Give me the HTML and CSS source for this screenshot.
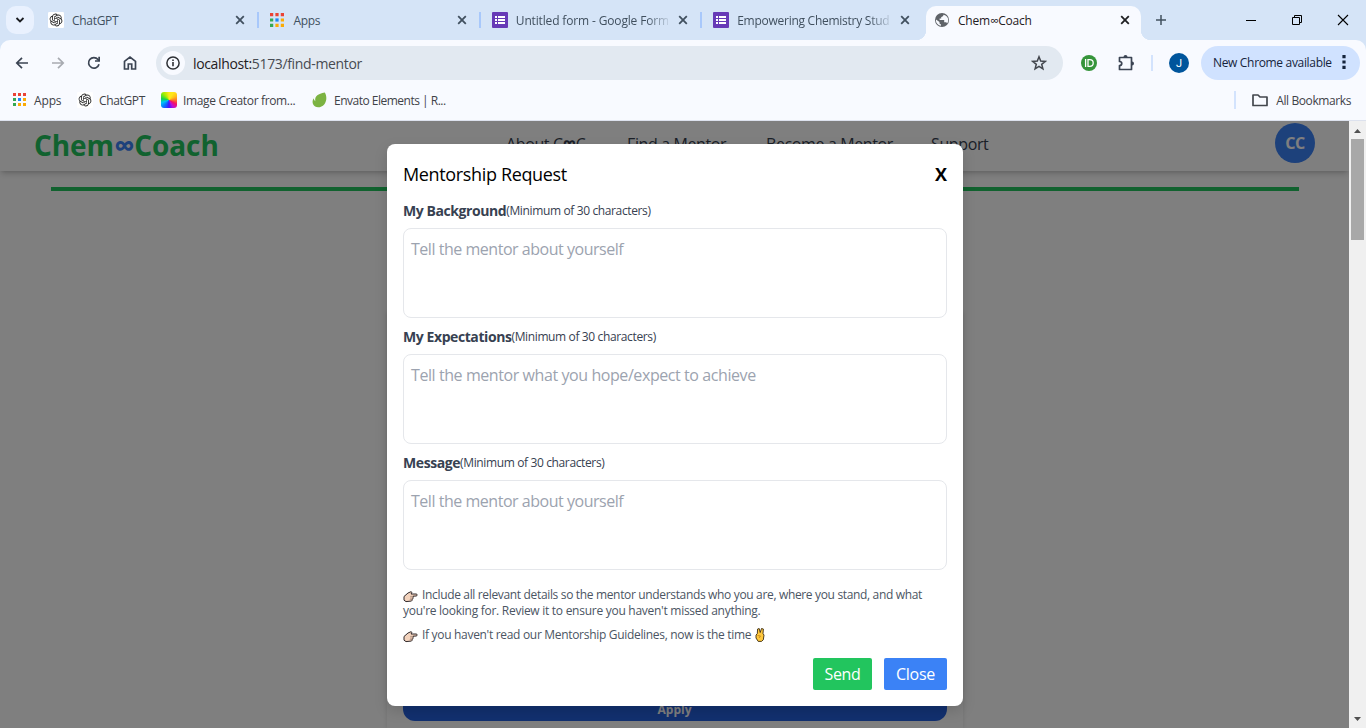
FILE: index.html
```html
<!DOCTYPE html>
<html lang="en">
<head>
<meta charset="utf-8">
<title>Chem∞Coach</title>
<link rel="stylesheet" href="styles.css">
</head>
<body>
<svg class="defs" width="0" height="0" aria-hidden="true">
  <symbol id="close" viewBox="0 0 10 10"><path d="M1.2 1.2l7.6 7.6M8.8 1.2L1.2 8.8" fill="none" stroke="currentColor" stroke-width="1.8"/></symbol>
  <symbol id="grid" viewBox="0 0 13 13"><path fill="#ea4335" d="M0 0h3v3H0zM5 0h3v3H5zM10 0h3v3h-3z"/><path fill="#34a853" d="M0 5h3v3H0zM0 10h3v3H0z"/><path fill="#1e88f5" d="M5 5h3v3H5z"/><path fill="#fbab05" d="M10 5h3v3h-3zM5 10h3v3H5zM10 10h3v3h-3z"/></symbol>
  <symbol id="gpt" viewBox="0 0 24 24"><rect width="24" height="24" rx="2" fill="#fff"/><g transform="translate(2.4 2.400) scale(.8)"><path fill="#222" d="M22.282 9.821a5.985 5.985 0 0 0-.516-4.910 6.046 6.046 0 0 0-6.510-2.900A6.065 6.065 0 0 0 4.981 4.182a5.985 5.985 0 0 0-3.998 2.900 6.046 6.046 0 0 0 .743 7.097 5.980 5.980 0 0 0 .511 4.911 6.051 6.051 0 0 0 6.515 2.900A5.985 5.985 0 0 0 13.260 24a6.056 6.056 0 0 0 5.772-4.206 5.990 5.990 0 0 0 3.998-2.900 6.056 6.056 0 0 0-.748-7.073zM13.260 22.430a4.476 4.476 0 0 1-2.876-1.041l.141-.080 4.779-2.758a.795.795 0 0 0 .393-.681v-6.737l2.020 1.169a.071.071 0 0 1 .038.052v5.583a4.504 4.504 0 0 1-4.495 4.493zM3.600 18.304a4.471 4.471 0 0 1-.535-3.014l.142.085 4.783 2.759a.771.771 0 0 0 .781 0l5.843-3.369v2.332a.080.080 0 0 1-.033.062L9.740 19.950a4.500 4.500 0 0 1-6.140-1.646zM2.341 7.896a4.485 4.485 0 0 1 2.366-1.973V11.600a.766.766 0 0 0 .388.677l5.815 3.355-2.020 1.168a.076.076 0 0 1-.071 0l-4.830-2.786A4.504 4.504 0 0 1 2.341 7.872zm16.596 3.856l-5.833-3.388L15.119 7.200a.076.076 0 0 1 .071 0l4.830 2.791a4.494 4.494 0 0 1-.677 8.105v-5.678a.790.790 0 0 0-.406-.666zm2.011-3.023l-.142-.085-4.774-2.782a.776.776 0 0 0-.785 0L9.409 9.230V6.897a.066.066 0 0 1 .028-.061l4.830-2.787a4.500 4.500 0 0 1 6.681 4.660zM8.307 12.863l-2.020-1.164a.080.080 0 0 1-.038-.057V6.075a4.500 4.500 0 0 1 7.376-3.454l-.142.081-4.778 2.758a.795.795 0 0 0-.393.682zm1.097-2.366l2.602-1.499 2.607 1.500v2.999l-2.597 1.500-2.607-1.500z"/></g></symbol>
  <symbol id="form" viewBox="0 0 16 16"><rect width="16" height="16" rx="1" fill="#673ab7"/><path fill="#fff" d="M3 4h2v2H3zM6 4h7v2H6zM3 7h2v2H3zM6 7h7v2H6zM3 10h2v2H3zM6 10h7v2H6z"/></symbol>
  <symbol id="point" viewBox="0 0 15 12"><path d="M1 5.5L5 2l3-1.3 1 .8-1 1.5h5.2c1.3 0 1.3 1.9 0 2L10 5.2c.8.7.3 1.5-.3 1.7.5.7 0 1.4-.6 1.5.3.9-.2 1.5-1 1.7L3 10.6 1 9.2z" fill="#f3d3bd" stroke="#30282a" stroke-width="1"/><path d="M7.2 5.4H10M7 7.1h2.7M6.8 8.6h2.4" stroke="#8b6d60" stroke-width=".6"/></symbol>
</svg>

<header class="chrome">
  <div class="tabstrip">
    <button class="tab-search"><svg width="10" height="8" viewBox="0 0 10 8"><path d="M1.5 2L5 5.5 8.5 2" fill="none" stroke="#1b1d21" stroke-width="1.8"/></svg></button>
    <div class="tab first"><svg class="fav"><use href="#gpt"/></svg><span class="tab-title">ChatGPT</span><svg class="x"><use href="#close"/></svg></div>
    <div class="tab"><svg class="fav apps"><use href="#grid"/></svg><span class="tab-title">Apps</span><svg class="x"><use href="#close"/></svg></div>
    <div class="tab"><svg class="fav"><use href="#form"/></svg><span class="tab-title faded form-title">Untitled form - Google Form</span><svg class="x"><use href="#close"/></svg></div>
    <div class="tab last"><svg class="fav"><use href="#form"/></svg><span class="tab-title faded study-title">Empowering Chemistry Stud</span><svg class="x"><use href="#close"/></svg></div>
    <div class="tab active"><svg class="fav" viewBox="0 0 16 16"><circle cx="8" cy="8" r="7" fill="#5f6368"/><path d="M9.500 2.700c-.2 1.500-1 2-2.300 2.200v1.600H5.600V8h4.600v2.300h1.200c1 0 1.500.5 1.600 1.200.9-1 1.200-2.200 1.200-3.500 0-2.400-1.500-4.500-4.700-5.300zM2 7.500c-.4 3 1.500 5.600 5 6.300v-1.500c-.9 0-1.500-.7-1.500-1.600v-.6z" fill="#f8faff"/></svg><span class="tab-title active-title">Chem∞Coach</span><svg class="x"><use href="#close"/></svg></div>
    <button class="new-tab"><svg width="12" height="12" viewBox="0 0 12 12"><path d="M6 1v10M1 6h10" stroke="#41505f" stroke-width="1.5"/></svg></button>
    <div class="window-buttons">
      <svg width="12" height="12" viewBox="0 0 12 12"><path d="M1 6.5h10" stroke="#000"/></svg>
      <svg width="12" height="12" viewBox="0 0 12 12"><path d="M1.5 3.5h7v7h-7zM3.5 3.5v-2h7v7h-2" fill="none" stroke="#000"/></svg>
      <svg width="12" height="12" viewBox="0 0 12 12"><path d="M1 1l10 10M11 1L1 11" stroke="#000" stroke-width="1.1"/></svg>
    </div>
  </div>
  <div class="toolbar">
    <div class="nav-icons">
      <svg width="16" height="16" viewBox="0 0 16 16"><path d="M14 8H3M8 2.8L2.8 8 8 13.2" fill="none" stroke="#3b4453" stroke-width="1.7"/></svg>
      <svg width="16" height="16" viewBox="0 0 16 16"><path d="M2 8h11M8 2.8L13.2 8 8 13.2" fill="none" stroke="#a8abb1" stroke-width="1.7"/></svg>
      <svg width="16" height="16" viewBox="0 0 16 16"><path d="M13 9.2A5.3 5.3 0 1 1 12 4.5l1 1.2" fill="none" stroke="#3b4453" stroke-width="1.7"/><path d="M14 1.8v5H9V5.2h3.3V1.8z" fill="#3b4453"/></svg>
      <svg width="16" height="16" viewBox="0 0 16 16"><path d="M2.5 14V6.3L8 2l5.5 4.3V14H9.700V9H6.300v5z" fill="none" stroke="#3b4453" stroke-width="1.7"/></svg>
    </div>
    <div class="address">
      <span class="info"><svg width="14" height="14" viewBox="0 0 14 14"><circle cx="7" cy="7" r="6.1" fill="none" stroke="#2d3035" stroke-width="1.5"/><path d="M7 6v4.300M7 3.500v1.600" stroke="#2d3035" stroke-width="1.600"/></svg></span>
      <span class="url"><b>localhost:</b>5173/find-mentor</span>
      <svg class="star" width="16" height="16" viewBox="0 0 16 16"><path d="M8 1.800l1.700 4.300 4.600.3-3.600 2.900 1.200 4.600L8 11.300l-3.900 2.600 1.200-4.600-3.600-2.900 4.600-.3z" fill="none" stroke="#43474e" stroke-width="1.500"/></svg>
    </div>
    <div class="extensions">
      <svg width="16" height="16" viewBox="0 0 16 16"><circle cx="8" cy="8" r="8" fill="#36953b"/><path d="M4.600 4v8M7 4.600h1.800a3.400 3.400 0 0 1 0 6.800H7z" fill="none" stroke="#fff" stroke-width="1.300"/></svg>
      <svg class="puzzle" width="18" height="18" viewBox="0 0 18 18"><path d="M2.500 3.500h12v12h-12v-4c3 0 3-4 0-4z" fill="none" stroke="#3b4453" stroke-width="1.700" stroke-linejoin="round"/><path d="M6.500 3a2 2 0 0 1 4 0zM15 7.500a2 2 0 0 1 0 4z" fill="#3b4453"/></svg>
    </div>
    <span class="avatar">J</span>
    <div class="update"><span>New Chrome available</span><svg width="4" height="16" viewBox="0 0 4 16"><path d="M.4 1h3.200v3.200H.4zM.4 6.400h3.200v3.200H.4zM.4 11.800h3.200V15H.4z" fill="#15243c"/></svg></div>
  </div>
  <div class="bookmarks">
    <svg class="mark-apps" width="13" height="13"><use href="#grid"/></svg><span class="bm apps-label">Apps</span>
    <svg width="16" height="16"><use href="#gpt"/></svg><span class="bm gpt-label">ChatGPT</span>
    <i class="wheel"></i><span class="bm image-label">Image Creator from...</span>
    <svg width="16" height="16" viewBox="0 0 16 16"><path d="M12.800.5c2 3 2.300 8.500-.6 12-3 3.600-9.300 4-11.100-.2-1-2.300-.5-4.300.5-6 .4 1.500 1 2.300 1.700 3-.7-4.800 1.500-7.100 9.500-8.800z" fill="#7cb342"/></svg><span class="bm envato-label">Envato Elements | R...</span>
    <div class="all-bookmarks"><svg width="18" height="16" viewBox="0 0 18 16"><path d="M2 3h5l2 2h7v8.500H2z" fill="none" stroke="#43474e" stroke-width="1.700" stroke-linejoin="round"/></svg><span class="bm all-label">All Bookmarks</span></div>
  </div>
</header>

<div class="viewport">
  <main class="page">
    <nav class="site-nav">
      <div class="logo">Chem<span>∞</span>Coach</div>
      <div class="links"><a class="l-about">About C<b>∞</b>C</a><a class="l-find">Find a Mentor</a><a class="l-become">Become a Mentor</a><a class="l-support">Support</a></div>
      <div class="user">CC</div>
    </nav>
    <div class="rule"></div>
    <article class="mentor-card"><button class="apply">Apply</button></article>
    <div class="overlay">
      <section class="modal">
        <div class="modal-head"><h2>Mentorship Request</h2><button class="dismiss">X</button></div>
        <label><b class="w-bg">My Background</b><small>(Minimum of 30 characters)</small></label>
        <textarea placeholder="Tell the mentor about yourself"></textarea>
        <label><b class="w-exp">My Expectations</b><small>(Minimum of 30 characters)</small></label>
        <textarea class="goals" placeholder="Tell the mentor what you hope/expect to achieve"></textarea>
        <label><b class="w-msg">Message</b><small>(Minimum of 30 characters)</small></label>
        <textarea placeholder="Tell the mentor about yourself"></textarea>
        <p class="note lead"><svg class="hand"><use href="#point"/></svg><span class="n1">Include all relevant details so the mentor understands who you are, where you stand, and what</span><br><span class="n2">you're looking for. Review it to ensure you haven't missed anything.</span></p>
        <p class="note"><svg class="hand"><use href="#point"/></svg><span class="n3">If you haven't read our Mentorship Guidelines, now is the time</span><svg class="victory" viewBox="0 0 10 14"><path d="M1 7l1.300-1.300L2.600 1l1.600-.5 1 4L6.500.5 8.400 1 8 5.500l1 1.600-.7 4.700-1.800 1.600H3.200L1 10z" fill="#ffc83d" stroke="#3b2b12" stroke-width=".9"/><path d="M2.500 7.500l3 .5-1.500 2" fill="none" stroke="#b67810" stroke-width=".7"/></svg></p>
        <div class="actions"><button class="send">Send</button><button class="shut">Close</button></div>
      </section>
    </div>
  </main>
  <div class="scrollbar"><i class="up"></i><i class="thumb"></i><i class="down"></i></div>
</div>
</body>
</html>
```
FILE: styles.css
```css
* { box-sizing: border-box; }
body { margin: 0; width: 1366px; height: 728px; overflow: hidden; font-family: "Open Sans", "Noto Sans", sans-serif; display: flex; flex-direction: column; }
button { border: 0; padding: 0; font: inherit; background: none; }
svg { display: block; flex: none; }
.defs { position: absolute; }
span, small, b, a { white-space: nowrap; }

/* Browser frame */
.chrome { height: 121px; flex: none; background: #d5e4f7; font-size: 12px; }
.tabstrip { height: 40px; display: flex; align-items: center; padding-left: 6px; }
.tab-search { width: 28px; height: 28px; border-radius: 10px; background: #e9f1fe; display: grid; place-items: center; }
.tab { width: 221.4px; height: 40px; display: flex; align-items: center; padding: 0 14px 0 11px; color: #41505f; background: linear-gradient(#a8c8fb, #a8c8fb) right 12px / 2px 16px no-repeat; }
.tab.first { width: 225.4px; padding-left: 14px; }
.tab.last { background: none; }
.fav { width: 16px; height: 16px; margin-right: 8px; }
.fav.apps { width: 14px; height: 14px; margin-right: 9px; }
.tab-title { flex: 1; overflow: hidden; letter-spacing: -.3px; padding-top: 1px; }
.form-title { letter-spacing: -.15px; }
.study-title { letter-spacing: -.26px; }
.active-title { letter-spacing: -.2px; }
.faded { -webkit-mask-image: linear-gradient(90deg, #000 86%, rgba(0,0,0,.15)); mask-image: linear-gradient(90deg, #000 86%, rgba(0,0,0,.15)); }
.faded + .x { margin-left: 10px; }
.x { width: 10px; height: 10px; }
.tab.active { width: 215px; height: 34px; margin: 6px 0 0 2.4px; padding: 0 11px 6px 8px; color: #1f2023; background: #f8faff; border-radius: 10px 10px 0 0; position: relative; }
.tab.active::before, .tab.active::after { content: ""; position: absolute; bottom: 0; width: 10px; height: 10px; }
.tab.active::before { left: -10px; background: radial-gradient(circle at 0 0, transparent 10px, #f8faff 10.5px); }
.tab.active::after { right: -10px; background: radial-gradient(circle at 100% 0, transparent 10px, #f8faff 10.5px); }
.new-tab { margin-left: 14px; }
.window-buttons { margin: 0 17px 0 auto; display: flex; gap: 34px; }

.toolbar { height: 46px; background: #f8faff; border-radius: 10px 10px 0 0; display: flex; align-items: center; padding: 0 6px 0 14px; }
.nav-icons { display: flex; gap: 20px; width: 142px; }
.address { width: 907px; height: 34px; border-radius: 17px; background: #e2e9f1; display: flex; align-items: center; padding: 0 16px 0 5px; }
.info { width: 24px; height: 24px; border-radius: 50%; background: #f8faff; display: grid; place-items: center; margin-right: 8px; }
.url { font-size: 14px; letter-spacing: -.35px; color: #474b52; }
.url b { font-weight: 400; color: #1f2023; }
.star { margin-left: auto; }
.extensions { display: flex; gap: 20px; align-items: center; padding: 0 17px 0 18px; width: 90px; border-right: 2px solid #d3e3fd; height: 16px; }
.avatar { width: 20px; height: 20px; margin: 0 12px 0 16px; border-radius: 50%; background: #00559c; color: #fff; display: grid; place-items: center; font: 11px Roboto, sans-serif; }
.update { width: 159px; height: 34px; border-radius: 17px; background: #d0e2ff; color: #15243c; display: flex; align-items: center; justify-content: space-between; padding: 0 14px 2px 12px; letter-spacing: -.33px; }

.bookmarks { height: 35px; background: #f8faff; border-bottom: 1px solid #dde2ee; display: flex; align-items: center; padding: 0 15px 7px 13px; color: #3f4248; }
.bm { letter-spacing: -.15px; padding-top: 1px; }
.apps-label { width: 28px; margin: 0 15px 0 8px; }
.gpt-label { width: 46px; margin: 0 16px 0 6px; letter-spacing: -.35px; }
.image-label { width: 114px; margin: 0 15px 0 6px; letter-spacing: -.35px; }
.envato-label { margin-left: 6px; letter-spacing: -.5px; }
.all-label { letter-spacing: -.4px; }
.wheel { width: 16px; height: 16px; border-radius: 3px; background: conic-gradient(#ffe71a 0 30deg, #ffc21a 60deg, #ff7b25 90deg, #f31265 120deg, #bd10d8 150deg, #4313ff 180deg, #0877ff 220deg, #00c5f7 250deg, #12d44a 280deg, #a2ed00 320deg, #ffe71a); }
.all-bookmarks { margin-left: auto; display: flex; align-items: center; gap: 7px; border-left: 2px solid #d3e3fd; padding-left: 15px; }

/* Web page */
.viewport { flex: 1; display: flex; min-height: 0; }
.page { width: 1349px; height: 607px; position: relative; overflow: hidden; background: #fff; }
.site-nav { height: 50px; display: flex; align-items: center; padding: 0 34px 6px 34px; box-shadow: 0 4px 6px -1px rgba(0,0,0,.16), 0 2px 4px -2px rgba(0,0,0,.14); }
.logo { width: 472px; font-size: 28px; font-weight: 700; line-height: 40px; color: #22c55e; letter-spacing: -.1px; padding-top: 3px; }
.logo span { color: #3b82f6; font-size: 29px; }
.links { display: flex; color: #374151; font-size: 16px; letter-spacing: -.38px; padding-top: 1px; }
.links b { font-size: 19px; line-height: 16px; }
.l-about { width: 121px; } .l-find { width: 139px; } .l-become { width: 165px; }
.user { width: 40px; height: 40px; margin-left: auto; border-radius: 50%; background: #3b82f6; color: #fff; display: grid; place-items: center; font-size: 16px; font-weight: 700; letter-spacing: -.5px; }
.rule { height: 4px; margin: 16px 50px 0 51px; background: #22c55e; }
.mentor-card { width: 576px; height: 417px; margin: 121px auto 0; padding: 0 16px 8px; display: flex; align-items: flex-end; box-shadow: 0 0 5px rgba(0,0,0,.12); }
.apply { width: 544px; height: 32px; border-radius: 12px; background: #2460df; color: #fff; font-size: 12px; font-weight: 700; line-height: 16px; padding-top: 9px; }
.overlay { position: absolute; inset: 0; background: rgba(0,0,0,.5); display: flex; justify-content: center; align-items: flex-start; padding: 23px 0 0 1px; }
.modal { width: 576px; height: 562px; border-radius: 8px; background: #fff; padding: 16px; box-shadow: 0 5px 14px rgba(0,0,0,.14); }
.modal-head { display: flex; justify-content: space-between; align-items: flex-start; line-height: 28px; height: 36px; }
h2 { margin: 0; font-size: 18px; font-weight: 500; letter-spacing: -.35px; }
.dismiss { font-size: 18px; font-weight: 700; line-height: 28px; }
label { display: flex; height: 32px; align-items: flex-start; line-height: 30px; color: #374151; }
label b { font-size: 14px; letter-spacing: -.42px; }
small { font-size: 12px; letter-spacing: -.37px; }
textarea { display: block; width: 544px; height: 90px; margin: 0 0 4px; padding: 8px 8px 8px 7px; border: 1px solid #e5e7eb; border-radius: 8px; resize: none; overflow: hidden; font: 16px/24px "Open Sans", sans-serif; letter-spacing: -.47px; }
.goals { letter-spacing: -.42px; }
textarea::placeholder { color: #9ca3af; opacity: 1; }
.note { margin: 0 0 8px; font-size: 12px; line-height: 16px; color: #4b5563; }
.n1 { letter-spacing: -.34px; }
.n2 { letter-spacing: -.27px; }
.n3 { letter-spacing: -.31px; }
.lead { margin-top: 17px; }
.hand { display: inline-block; width: 15px; height: 12px; margin-right: 4px; vertical-align: -4px; }
.victory { display: inline-block; width: 10px; height: 14px; margin-left: 4px; vertical-align: -3px; }
.actions { display: flex; justify-content: flex-end; gap: 12px; margin-top: 15px; }
.actions button { height: 32px; border-radius: 2px; color: #fff; font-size: 16px; letter-spacing: -.3px; }
.send { width: 59px; background: #22c55e; }
.shut { width: 63px; background: #3b82f6; }

.scrollbar { width: 17px; background: #f0f0f0; display: flex; flex-direction: column; align-items: center; padding: 8px 0 7px; }
.up, .down { width: 7px; height: 4px; background: #505050; clip-path: polygon(50% 0, 100% 100%, 0 100%); }
.down { clip-path: polygon(0 0, 100% 0, 50% 100%); margin-top: auto; }
.thumb { width: 13px; height: 101px; margin-top: 6px; background: #a8a8a8; }
```
